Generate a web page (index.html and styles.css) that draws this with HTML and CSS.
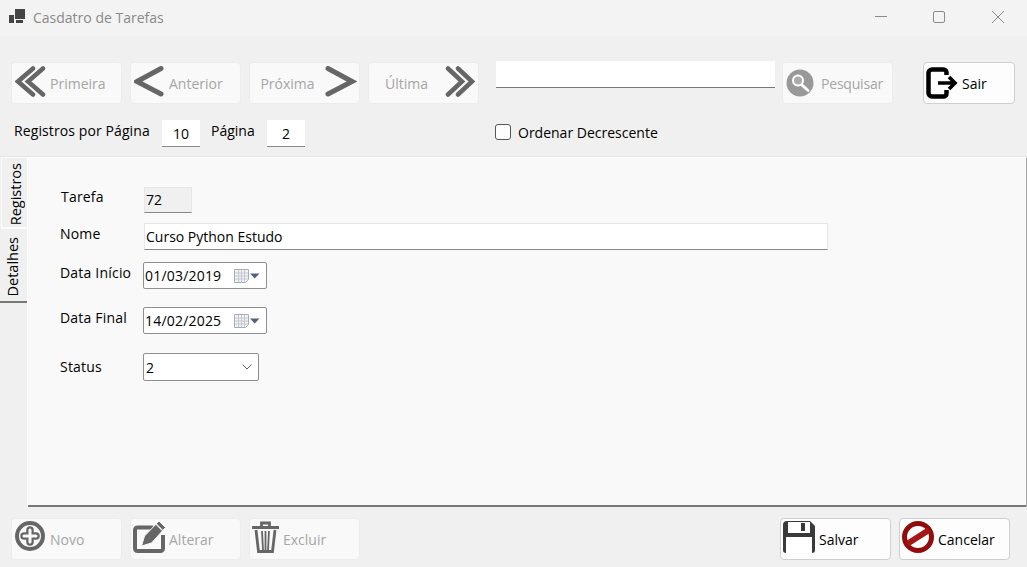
FILE: index.html
```html
<!DOCTYPE html>
<html lang="pt">
<head>
<meta charset="utf-8">
<title>Casdatro de Tarefas</title>
<link rel="stylesheet" href="styles.css">
</head>
<body>
<div class="window">
  <header class="titlebar">
    <svg class="app-icon" width="16" height="16" viewBox="0 0 16 16"><path fill="#444" d="M0 6h5v8H0zM6 0h10v10H6zM7 11h7v3H7z"/></svg>
    <span class="title">Casdatro de Tarefas</span>
    <div class="winctl">
      <svg width="14" height="14" viewBox="0 0 14 14"><path d="M0 7.500h12" stroke="#8a8a8a" fill="none"/></svg>
      <svg width="14" height="14" viewBox="0 0 14 14"><rect x=".5" y="2.500" width="11" height="11" rx="1.500" stroke="#8a8a8a" fill="none"/></svg>
      <svg width="14" height="14" viewBox="0 0 14 14"><path d="M1 2l12 12M13 2L1 14" stroke="#8a8a8a" fill="none"/></svg>
    </div>
  </header>

  <section class="toolbar">
    <div class="nav-row">
      <div class="btn-group">
        <button class="btn off icon-left"><svg width="32" height="34" viewBox="0 0 32 34"><path d="M18 2.500L3 15.500l15 13M28 2.500L13 15.500l15 13" fill="none" stroke="#666" stroke-width="4.500" stroke-linecap="round"/></svg><span>Primeira</span></button>
        <button class="btn off icon-left"><svg width="32" height="34" viewBox="0 0 32 34"><path d="M27 2.500L3 15.500l24 12.500" fill="none" stroke="#666" stroke-width="5" stroke-linecap="round"/></svg><span>Anterior</span></button>
        <button class="btn off icon-right"><span>Próxima</span><svg width="32" height="34" viewBox="0 0 32 34"><path d="M3 2.500l24 13L3 28" fill="none" stroke="#666" stroke-width="5" stroke-linecap="round"/></svg></button>
        <button class="btn off icon-right"><span>Última</span><svg width="32" height="34" viewBox="0 0 32 34"><path d="M4 2.500l14 13-14 13M14 2.500l14 13-14 13" fill="none" stroke="#666" stroke-width="4.500" stroke-linecap="round"/></svg></button>
      </div>
      <div class="text-input search"></div>
      <button class="btn off search-btn"><svg width="28" height="28" viewBox="0 0 28 28"><circle cx="14" cy="14" r="13.500" fill="#999"/><circle cx="12" cy="11.500" r="5" fill="#aaa" stroke="#fff" stroke-width="2"/><path d="M16 16l6 5.500" stroke="#fff" stroke-width="3" stroke-linecap="round"/></svg><span>Pesquisar</span></button>
      <button class="btn on sair"><svg width="34" height="34" viewBox="0 0 34 34"><path d="M21.500 9V6.500a3 3 0 0 0-3-3H7a3.500 3.500 0 0 0-3.500 3.500v20a3.500 3.500 0 0 0 3.500 3.500h11.500a3 3 0 0 0 3-3V24" fill="none" stroke="#000" stroke-width="4.500"/><path d="M13 17h17M24 11l6 6-6 6" fill="none" stroke="#000" stroke-width="3.600"/></svg><span>Sair</span></button>
    </div>
    <div class="page-row">
      <span class="lbl-regs">Registros por Página</span>
      <div class="num-box box-10">10</div>
      <span class="lbl-pag">Página</span>
      <div class="num-box box-2">2</div>
      <label class="check"><span class="checkbox"></span>Ordenar Decrescente</label>
    </div>
  </section>

  <main class="tabs">
    <nav class="tab-strip">
      <div class="tab tab-reg"><span>Registros</span></div>
      <div class="tab tab-det"><span>Detalhes</span></div>
    </nav>
    <section class="panel">
      <div class="row row-tarefa"><span class="label">Tarefa</span><div class="field ro">72</div></div>
      <div class="row row-nome"><span class="label">Nome</span><div class="field nome">Curso Python Estudo</div></div>
      <div class="row row-ini"><span class="label">Data Início</span><div class="combo date"><span>01/03/2019</span><svg class="cal" width="26" height="16" viewBox="0 0 26 16"><path d="M.5 1.500h14v10l-3 3H.5z" fill="#f1f3f6" stroke="#a9adb5"/><path d="M4.500 2v12M7.500 2v12M10.500 2v12M1 5h13M1 8h13M1 11h13" stroke="#c4c8cf" fill="none"/><path d="M16 5.500h9.500l-4.750 5z" fill="#52617f"/></svg></div></div>
      <div class="row row-fim"><span class="label">Data Final</span><div class="combo date"><span>14/02/2025</span><svg class="cal" width="26" height="16" viewBox="0 0 26 16"><path d="M.5 1.500h14v10l-3 3H.5z" fill="#f1f3f6" stroke="#a9adb5"/><path d="M4.500 2v12M7.500 2v12M10.500 2v12M1 5h13M1 8h13M1 11h13" stroke="#c4c8cf" fill="none"/><path d="M16 5.500h9.500l-4.750 5z" fill="#52617f"/></svg></div></div>
      <div class="row row-status"><span class="label">Status</span><div class="combo status"><span>2</span><svg width="10" height="6" viewBox="0 0 10 6"><path d="M.5.500L5 5 9.500.500" fill="none" stroke="#606060"/></svg></div></div>
    </section>
  </main>

  <footer class="actions">
    <div class="btn-group">
      <button class="btn off icon-left"><svg class="lift" width="32" height="32" viewBox="0 0 32 32"><circle cx="15" cy="15" r="13" fill="none" stroke="#666" stroke-width="4"/><path d="M15 9v12M9 15h12" stroke="#666" stroke-width="7.500" stroke-linecap="round"/><path d="M15 9v12M9 15h12" stroke="#f9f9f9" stroke-width="3" stroke-linecap="round"/></svg><span>Novo</span></button>
      <button class="btn off icon-left tight"><svg class="lift" width="34" height="32" viewBox="0 0 34 32"><path d="M30 14v13.500a2.500 2.500 0 0 1-2.500 2.500H4.500A2.500 2.500 0 0 1 2 27.500V9a2.500 2.500 0 0 1 2.500-2.500H20" fill="none" stroke="#666" stroke-width="4"/><path d="M26 0l6.500 6.500-14 15.500-10 3 3-10z" fill="#666" stroke="#f9f9f9" stroke-width="1"/><path d="M23 3l6.500 6.500" stroke="#f9f9f9" stroke-width="1.200"/></svg><span>Alterar</span></button>
      <button class="btn off icon-left tight"><svg class="lift" width="29" height="32" viewBox="0 0 29 32"><path d="M0 6.500h27M9.500 5V2h8v3" fill="none" stroke="#666" stroke-width="2.800"/><path d="M4 9l2.500 21.500h14L23 9" fill="none" stroke="#666" stroke-width="2.800"/><path d="M10 10l1 19M13.500 10v19M17 10l-1 19" stroke="#666" stroke-width="1.800" fill="none"/></svg><span>Excluir</span></button>
    </div>
    <div class="btn-group">
      <button class="btn on icon-left tight"><svg class="lift" width="34" height="32" viewBox="0 0 34 32"><path d="M4 0h23l5 5v24a3 3 0 0 1-3 3H3a3 3 0 0 1-3-3V4a4 4 0 0 1 4-4z" fill="#3a3a3a"/><rect x="5" y="1" width="22" height="11" fill="#fff"/><rect x="18" y="2" width="4" height="8" fill="#3a3a3a"/><rect x="3" y="16" width="26" height="16" fill="#fff"/></svg><span>Salvar</span></button>
      <button class="btn on icon-left tight"><svg class="lift" width="34" height="32" viewBox="0 0 34 32"><circle cx="16" cy="16" r="13.500" fill="#fff" stroke="#930c0c" stroke-width="5"/><path d="M5 23L27 9" stroke="#a51616" stroke-width="6"/></svg><span>Cancelar</span></button>
    </div>
  </footer>
</div>
</body>
</html>
```
FILE: styles.css
```css
* { box-sizing: border-box; }
html, body { margin: 0; padding: 0; }
body { width: 1027px; height: 567px; overflow: hidden; background: #f0f0f0; font-family: "Open Sans", "Noto Sans", sans-serif; font-size: 14px; color: #000; }
.window { display: flex; flex-direction: column; height: 567px; }
.titlebar { height: 36px; flex: none; background: #f3f3f3; display: flex; align-items: center; padding-left: 9px; }
.app-icon { margin-bottom: 2px; }
.title { margin-left: 8px; margin-bottom: 2px; color: #8a8a8a; }
.winctl { margin-left: auto; display: flex; gap: 44px; padding-right: 22px; margin-top: -4px; }
.toolbar { height: 121px; flex: none; padding: 26px 12px 0 11px; border-bottom: 1px solid #e6e6e6; }
.nav-row { display: flex; align-items: flex-start; }
.btn-group { display: flex; gap: 8px; }
.btn { width: 111px; height: 42px; padding: 0; font: inherit; display: flex; align-items: center; border-radius: 4px; }
.btn span { padding-top: 1px; }
.btn.off { border: 1px solid #ececec; color: #a6a6a6; background: #f9f9f9; }
.btn.on { border: 1px solid #cfcfcf; color: #000; background: #fdfdfd; }
.icon-left { padding-left: 3px; gap: 3px; }
.icon-left.tight { padding-left: 2px; gap: 2px; }
.icon-right { padding-right: 2px; }
.icon-right span { flex: 1; text-align: center; }
.lift { margin-bottom: 4px; }
.search { margin: -1px 0 0 17px; width: 279px; }
.text-input { height: 27px; background: #fff; border-bottom: 1px solid #777; }
.search-btn { margin-left: 7px; padding-left: 3px; gap: 7px; letter-spacing: -.2px; }
.sair { width: 92px; margin-left: 30px; padding-left: 1px; gap: 3px; }
.page-row { display: flex; align-items: center; height: 27px; margin-top: 16px; }
.lbl-regs { margin-left: 3px; margin-top: -7px; width: 136px; white-space: nowrap; letter-spacing: .1px; }
.num-box { width: 38px; height: 27px; background: #fff; border-bottom: 1px solid #8a8a8a; text-align: center; line-height: 27px; }
.box-10 { margin-left: 12px; }
.lbl-pag { margin-left: 11px; margin-top: -7px; width: 45px; }
.box-2 { margin-left: 11px; }
.check { display: flex; align-items: center; margin-left: 190px; margin-top: -3px; gap: 7px; }
.checkbox { width: 16px; height: 16px; border: 1px solid #555; border-radius: 3px; background: #fdfdfd; }
.tabs { height: 350px; flex: none; display: flex; }
.tab-strip { width: 27px; flex: none; }
.tab { display: flex; align-items: center; justify-content: center; font-size: 14.5px; }
.tab span { writing-mode: vertical-rl; transform: rotate(180deg); }
.tab-reg { height: 72px; margin-left: 1px; padding: 3px 0 0 1px; background: #f0f0f0; border: solid #fbfbfb; border-width: 1px 0 2px 1px; }
.tab-det { height: 74px; background: #f0f0f0; border-bottom: 2px solid #777; padding: 3px 2px 0 0; }
.panel { flex: 1; background: #f9f9f9; border: solid #fff; border-width: 1px 1px 0 1px; border-right-color: #a8a8a8; box-shadow: inset 0 -2px 0 #777; }
.row { display: flex; align-items: center; padding-left: 32px; }
.label { white-space: nowrap; width: 84px; letter-spacing: .2px; }
.row-tarefa { margin-top: 29px; }
.row-tarefa .label { margin-left: 1px; width: 83px; margin-top: -7px; }
.field { height: 27px; background: #fff; border: 1px solid #e6e6e6; border-bottom-color: #888; line-height: 26px; padding-left: 1px; }
.ro { width: 48px; height: 26px; background: #f0f0f0; line-height: 24px; }
.nome { width: 684px; }
.row-nome { margin-top: 10px; }
.row-nome .label { margin-top: -7px; }
.combo { height: 27px; background: #fff; border: 1px solid #8f8f8f; border-radius: 2px; display: flex; align-items: center; padding-left: 1px; margin-left: -1px; }
.date { width: 124px; letter-spacing: .2px; }
.date .cal { margin-left: auto; margin-right: 6px; }
.row-ini { margin-top: 12px; }
.row-ini .label { margin-top: -7px; }
.row-fim { margin-top: 18px; }
.row-fim .label { margin-top: -7px; }
.row-status { margin-top: 19px; }
.row-status .label { margin-top: -2px; }
.status { width: 116px; height: 28px; justify-content: space-between; padding: 0 6px 0 2px; }
.actions { flex: 1; display: flex; justify-content: space-between; padding: 11px 17px 0 11px; }
```
